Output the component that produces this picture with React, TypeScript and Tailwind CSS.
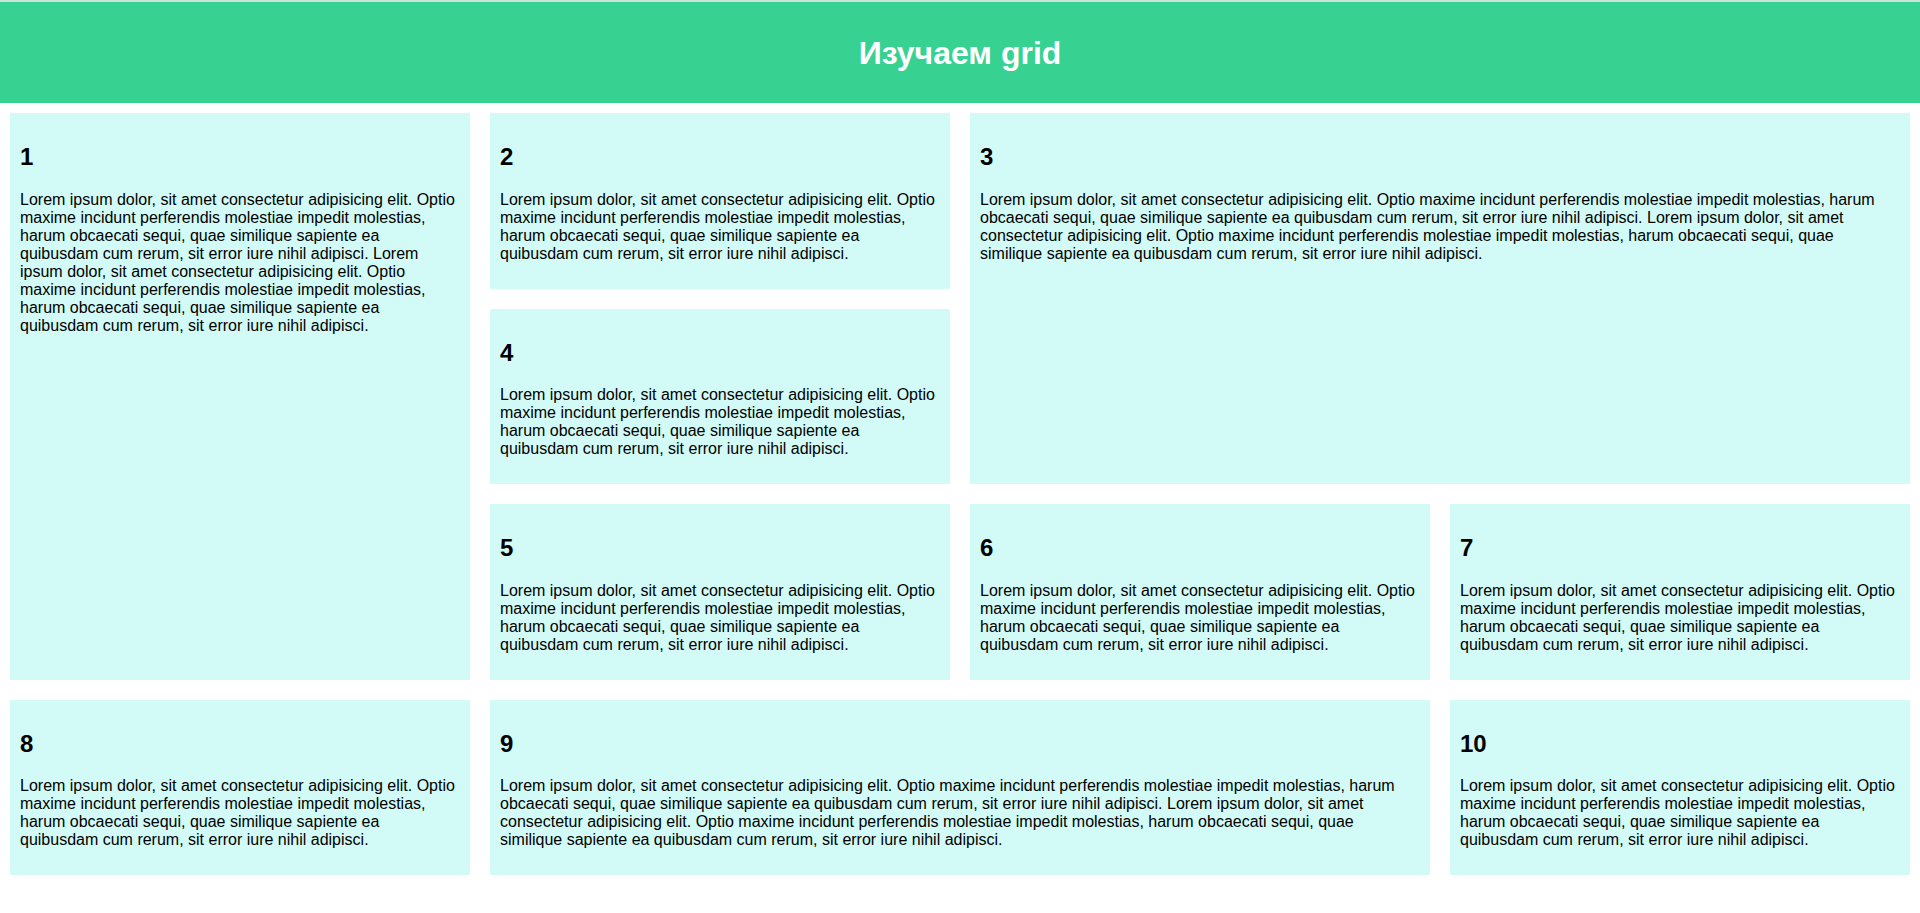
const lorem =
  'Lorem ipsum dolor, sit amet consectetur adipisicing elit. Optio maxime incidunt perferendis molestiae impedit molestias, harum obcaecati sequi, quae similique sapiente ea quibusdam cum rerum, sit error iure nihil adipisci.'

const cards = [
  { n: 1, cls: 'col-start-1 row-start-1 row-span-3', double: true },
  { n: 2, cls: 'col-start-2 row-start-1' },
  { n: 3, cls: 'col-start-3 col-span-2 row-start-1 row-span-2', double: true },
  { n: 4, cls: 'col-start-2 row-start-2' },
  { n: 5, cls: 'col-start-2 row-start-3' },
  { n: 6, cls: 'col-start-3 row-start-3' },
  { n: 7, cls: 'col-start-4 row-start-3' },
  { n: 8, cls: 'col-start-1 row-start-4' },
  { n: 9, cls: 'col-start-2 col-span-2 row-start-4', double: true },
  { n: 10, cls: 'col-start-4 row-start-4' },
]

export default function App() {
  return (
    <div className="min-h-screen bg-white text-black font-['Liberation_Sans',Arial,sans-serif]">
      <div className="h-[2px] bg-[#c9e4da]" />
      <header className="h-[101px] bg-[#37d192] flex items-center justify-center">
        <h1 className="text-[32px] font-bold text-white leading-none">Изучаем grid</h1>
      </header>
      <div className="grid grid-cols-[repeat(4,460px)] gap-[20px] p-[10px]">
        {cards.map((c) => (
          <div key={c.n} className={`${c.cls} bg-[#d2fbf7] p-[10px]`}>
            <h2 className="text-[24px] font-bold leading-[27.6px] mt-[20px] mb-[20px]">{c.n}</h2>
            <p className="text-[16px] leading-[18px] mb-[16px]">
              {c.double ? `${lorem} ${lorem}` : lorem}
            </p>
          </div>
        ))}
      </div>
    </div>
  )
}
